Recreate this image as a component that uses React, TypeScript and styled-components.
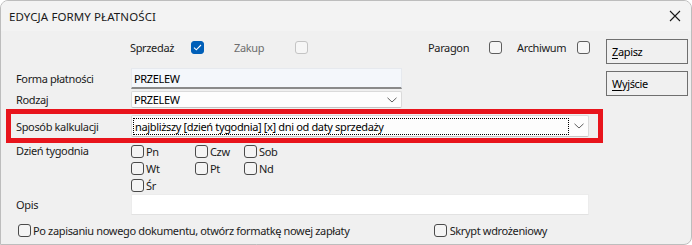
import React from 'react';
import styled, { createGlobalStyle, css } from 'styled-components';

const GlobalStyle = createGlobalStyle`
  html, body {
    margin: 0;
    padding: 0;
    background: #ffffff;
  }
  body {
    font-family: "Noto Sans", "Liberation Sans", sans-serif;
    font-size: 11px;
    letter-spacing: -0.35px;
    color: #1b1b1b;
  }
`;

const Window = styled.div`
  box-sizing: border-box;
  width: 692px;
  height: 245px;
  border: 1px solid #bdbdbd;
  border-radius: 8px 8px 8px 0;
  background: #f0f0f0;
  overflow: hidden;
  display: flex;
  flex-direction: column;
`;

const TitleBar = styled.div`
  height: 30px;
  flex-shrink: 0;
  display: flex;
  align-items: center;
  justify-content: space-between;
  padding: 0 8px 0 8px;
  background: #f3f3f3;
`;

const Title = styled.div`
  font-size: 11.5px;
  color: #1a1a1a;
  letter-spacing: 0.1px;
`;

const CloseButton = styled.div`
  width: 20px;
  height: 20px;
  display: flex;
  align-items: center;
  justify-content: center;
  margin-right: -2px;
`;

const Body = styled.div`
  flex: 1;
  display: flex;
`;

const Main = styled.div`
  width: 602px;
  display: flex;
  flex-direction: column;
`;

const TopRow = styled.div`
  height: 22px;
  margin-top: 5px;
  display: flex;
  align-items: center;
`;

const TopItem = styled.div<{ $offset: number; $labelWidth?: number; $disabled?: boolean }>`
  display: flex;
  align-items: center;
  margin-left: ${(p) => p.$offset}px;
  color: ${(p) => (p.$disabled ? '#6d6d6d' : '#1b1b1b')};

  & > span {
    width: ${(p) => p.$labelWidth ?? 61}px;
  }
`;

const Box = styled.div<{ $variant?: 'checked' | 'disabled' | 'plain' | 'classic' }>`
  box-sizing: border-box;
  width: 13px;
  height: 13px;
  flex-shrink: 0;
  border-radius: 3px;
  display: flex;
  align-items: center;
  justify-content: center;
  ${(p) =>
    p.$variant === 'checked'
      ? css`
          background: #005fb8;
          border: 1px solid #005fb8;
        `
      : p.$variant === 'disabled'
      ? css`
          background: #f6f6f6;
          border: 1px solid #c4c4c4;
        `
      : p.$variant === 'classic'
      ? css`
          background: #f4f4f4;
          border: 1px solid #4a4a4a;
        `
      : css`
          background: #f6f6f6;
          border: 1px solid #5e5e5e;
        `}
`;

const FieldRow = styled.div<{ $top: number; $height: number; $highlight?: boolean }>`
  box-sizing: border-box;
  display: flex;
  align-items: center;
  margin-top: ${(p) => p.$top}px;
  height: ${(p) => p.$height}px;
  padding-left: 15px;
  ${(p) =>
    p.$highlight &&
    css`
      margin-left: 5px;
      width: 597px;
      border: 5px solid #e8141c;
      padding-left: 5px;
      padding-right: 8px;
    `}
`;

const Label = styled.div<{ $alignTop?: boolean }>`
  width: 115px;
  flex-shrink: 0;
  align-self: ${(p) => (p.$alignTop ? 'flex-start' : 'center')};
  margin-top: ${(p) => (p.$alignTop ? '-3px' : '0')};
`;

const TextInput = styled.div<{ $width: number; $tinted?: boolean }>`
  box-sizing: border-box;
  width: ${(p) => p.$width}px;
  height: 21px;
  display: flex;
  align-items: center;
  padding-left: 2px;
  color: #000000;
  background: ${(p) => (p.$tinted ? '#f4f7fb' : '#ffffff')};
  border: 1px solid ${(p) => (p.$tinted ? '#e6e9ee' : '#ececec')};
  border-bottom: ${(p) => (p.$tinted ? '2px solid #8a8a8a' : '1px solid #e2e2e2')};
`;

const Combo = styled.div<{ $width: number; $height: number }>`
  box-sizing: border-box;
  width: ${(p) => p.$width}px;
  height: ${(p) => p.$height}px;
  display: flex;
  align-items: center;
  justify-content: space-between;
  padding: 0 4px 0 1px;
  background: #fdfdfd;
  border: 1px solid #dadada;
  border-bottom-color: #c4c4c4;
  border-radius: 2px;
  color: #000000;
`;

const FocusText = styled.div`
  box-sizing: border-box;
  flex: 1;
  height: 17px;
  display: flex;
  align-items: center;
  padding-left: 1px;
  margin-right: 5px;
  border: 1px dotted #000000;
`;

const PlainText = styled.div`
  padding-left: 1px;
`;

const DayGrid = styled.div`
  display: grid;
  grid-template-columns: 64px 49px 60px;
  grid-auto-rows: 17px;
`;

const CheckLine = styled.label<{ $gap?: number; $pushRight?: number }>`
  display: flex;
  align-items: center;
  gap: ${(p) => p.$gap ?? 2}px;
  height: 14px;
  ${(p) =>
    p.$pushRight !== undefined &&
    css`
      margin-left: auto;
      margin-right: ${p.$pushRight}px;
    `}
`;

const BottomRow = styled.div`
  margin-top: 9px;
  height: 14px;
  display: flex;
  align-items: center;
  padding-left: 17px;
`;

const Side = styled.div`
  display: flex;
  flex-direction: column;
  gap: 7px;
  padding-top: 8px;
  padding-left: 3px;
`;

const ActionButton = styled.div`
  box-sizing: border-box;
  width: 82px;
  height: 25px;
  display: flex;
  align-items: center;
  padding-left: 5px;
  border: 1px solid #6f6f6f;
  background: #f0f0f0;
  color: #000000;

  & u {
    text-decoration-thickness: 1px;
    text-underline-offset: 2px;
  }
`;

const Chevron = () => (
  <svg width="10" height="6" viewBox="0 0 10 6">
    <path d="M0.5 0.8 L5 5 L9.5 0.8" fill="none" stroke="#5f5f5f" strokeWidth="1" />
  </svg>
);

const Check = () => (
  <svg width="9" height="7" viewBox="0 0 9 7">
    <path d="M1 3.6 L3.3 5.8 L8 1" fill="none" stroke="#ffffff" strokeWidth="1.1" />
  </svg>
);

const days = [
  ['Pn', 'Czw', 'Sob'],
  ['Wt', 'Pt', 'Nd'],
  ['Śr'],
];

const App = () => {
  return (
    <>
      <GlobalStyle />
      <Window>
        <TitleBar>
          <Title>EDYCJA FORMY PŁATNOŚCI</Title>
          <CloseButton>
            <svg width="12" height="12" viewBox="0 0 12 12">
              <path d="M1 1 L11 11 M11 1 L1 11" stroke="#1a1a1a" strokeWidth="1.1" />
            </svg>
          </CloseButton>
        </TitleBar>
        <Body>
          <Main>
            <TopRow>
              <TopItem $offset={129}>
                <span>Sprzedaż</span>
                <Box $variant="checked">
                  <Check />
                </Box>
              </TopItem>
              <TopItem $offset={30} $disabled>
                <span>Zakup</span>
                <Box $variant="disabled" />
              </TopItem>
              <TopItem $offset={120}>
                <span>Paragon</span>
                <Box />
              </TopItem>
              <TopItem $offset={15} $labelWidth={60}>
                <span>Archiwum</span>
                <Box />
              </TopItem>
            </TopRow>

            <FieldRow $top={10} $height={21}>
              <Label>Forma płatności</Label>
              <TextInput $width={271} $tinted>
                PRZELEW
              </TextInput>
            </FieldRow>

            <FieldRow $top={2} $height={17}>
              <Label>Rodzaj</Label>
              <Combo $width={271} $height={17}>
                <PlainText>PRZELEW</PlainText>
                <Chevron />
              </Combo>
            </FieldRow>

            <FieldRow $top={1} $height={34} $highlight>
              <Label>Sposób kalkulacji</Label>
              <Combo $width={458} $height={22}>
                <FocusText>najbliższy [dzień tygodnia] [x] dni od daty sprzedaży</FocusText>
                <Chevron />
              </Combo>
            </FieldRow>

            <FieldRow $top={3} $height={48}>
              <Label $alignTop>Dzień tygodnia</Label>
              <DayGrid>
                {days.flat().map((d) => (
                  <CheckLine key={d}>
                    <Box $variant="classic" />
                    <span>{d}</span>
                  </CheckLine>
                ))}
              </DayGrid>
            </FieldRow>

            <FieldRow $top={0} $height={20}>
              <Label>Opis</Label>
              <TextInput $width={458} />
            </FieldRow>

            <BottomRow>
              <CheckLine $gap={2}>
                <Box $variant="classic" />
                <span>Po zapisaniu nowego dokumentu, otwórz formatkę nowej zapłaty</span>
              </CheckLine>
              <CheckLine $gap={3} $pushRight={56}>
                <Box $variant="classic" />
                <span>Skrypt wdrożeniowy</span>
              </CheckLine>
            </BottomRow>
          </Main>

          <Side>
            <ActionButton>
              <span>
                <u>Z</u>apisz
              </span>
            </ActionButton>
            <ActionButton>
              <span>
                <u>W</u>yjście
              </span>
            </ActionButton>
          </Side>
        </Body>
      </Window>
    </>
  );
};

export default App;
